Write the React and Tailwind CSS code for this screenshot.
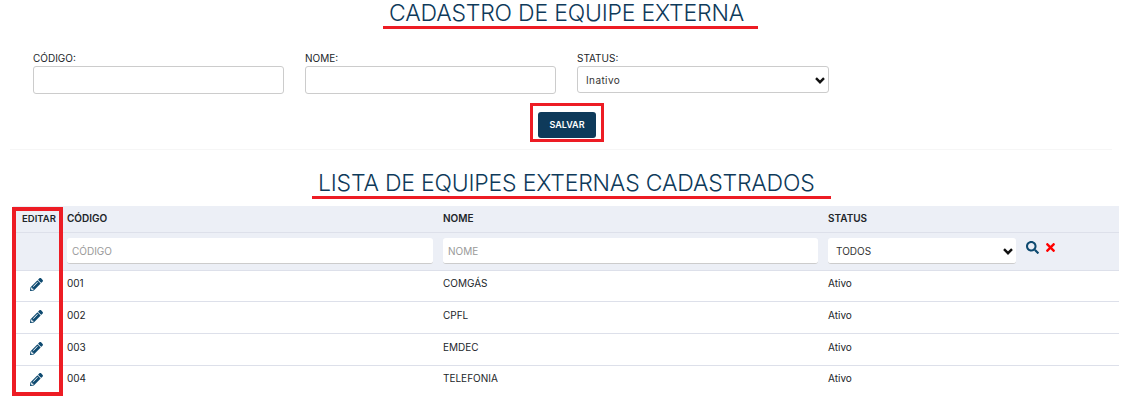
import React from 'react';
import { FaPencilAlt, FaSearch, FaTimes } from 'react-icons/fa';

const FONT = "font-['Inter','Liberation_Sans',sans-serif]";

const rows = [
  { codigo: '001', nome: 'COMGÁS', h: 'h-[31px]' },
  { codigo: '002', nome: 'CPFL', h: 'h-[32px]' },
  { codigo: '003', nome: 'EMDEC', h: 'h-[32px]' },
  { codigo: '004', nome: 'TELEFONIA', h: 'h-[31px]' },
];

const Chevron = () => (
  <svg width="10" height="7" viewBox="0 0 10 7" className="absolute right-[3px] top-[10px] pointer-events-none">
    <path d="M1 1.2 L5 5.2 L9 1.2" fill="none" stroke="#111" strokeWidth="2.4" />
  </svg>
);

const Field = ({ label, className, children }) => (
  <div className={className}>
    <div className="text-[10px] leading-[14px] text-[#212529] h-[15px]">{label}</div>
    {children}
  </div>
);

const Heading = ({ children, className }) => (
  <div className="flex justify-center">
    <h2 className={`box-border h-[29px] text-[23px] leading-[27px] tracking-[-0.2px] font-light text-[#0e3a5a] border-b-[3px] border-[#ed1c24] whitespace-nowrap pl-[6px] ${className}`}>
      {children}
    </h2>
  </div>
);

const App = () => {
  return (
    <div className={`relative w-[1122px] h-[402px] overflow-hidden bg-white ${FONT}`}>
      <Heading className="w-[375px] ml-[19px]">CADASTRO DE EQUIPE EXTERNA</Heading>

      <div className="flex gap-[21px] pl-[33px] mt-[22px]">
        <Field label="CÓDIGO:" className="w-[251px]">
          <input className="w-full h-[28px] bg-white border border-[#ccc] rounded-[3px]" />
        </Field>
        <Field label="NOME:" className="w-[251px]">
          <input className="w-full h-[28px] bg-white border border-[#ccc] rounded-[3px]" />
        </Field>
        <Field label="STATUS:" className="w-[252px]">
          <div className="relative h-[27px] border border-[#ccc] rounded-[3px] pl-[8px] text-[10px] tracking-[0.4px] leading-[27px] text-[#333]">
            Inativo
            <Chevron />
          </div>
        </Field>
      </div>

      <div className="flex justify-center mt-[9px]">
        <div className="border-[3px] border-[#ed1c24] w-[74px] h-[39px] pt-[4px] pl-[5px] ml-[12px]">
          <button className="w-[58px] h-[26px] bg-[#0e3a5a] rounded-[3px] text-white text-[9px] font-semibold">SALVAR</button>
        </div>
      </div>

      <div className="mx-[10px] mt-[7px] border-t border-[#f6f6f6]" />

      <div className="mt-[20px]">
        <Heading className="w-[519px] ml-[21px]">LISTA DE EQUIPES EXTERNAS CADASTRADOS</Heading>
      </div>

      <table className="mt-[7px] ml-[13px] w-[1106px] table-fixed border-collapse text-[10px] text-[#212529]">
        <colgroup>
          <col className="w-[49px]" />
          <col className="w-[376px]" />
          <col className="w-[385px]" />
          <col className="w-[198px]" />
          <col />
        </colgroup>
        <thead className="bg-[#eceff6]">
          <tr className="h-[26px] border-b border-[#dde0ea] text-left font-semibold">
            <th className="text-center font-semibold text-[9.5px] pl-[3px]">EDITAR</th>
            <th className="pl-[5px] font-semibold">CÓDIGO</th>
            <th className="pl-[5px] font-semibold">NOME</th>
            <th className="pl-[5px] font-semibold">STATUS</th>
            <th />
          </tr>
          <tr className="h-[38px] border-b border-[#dde0ea]">
            <td />
            <td className="px-[5px]">
              <div className="h-[26px] bg-white rounded-[3px] border-b border-[#ccc] pl-[5px] leading-[26px] text-[#999]">CÓDIGO</div>
            </td>
            <td className="px-[5px]">
              <div className="h-[26px] bg-white rounded-[3px] border-b border-[#ccc] pl-[5px] leading-[26px] text-[#999]">NOME</div>
            </td>
            <td className="px-[5px]">
              <div className="relative h-[26px] bg-white rounded-[3px] border-b border-[#ccc] pl-[8px] leading-[26px] text-[#333]">
                TODOS
                <Chevron />
              </div>
            </td>
            <td className="pl-[5px] align-top pt-[8px]">
              <div className="flex items-center gap-[5px]">
                <FaSearch size={13} className="text-[#0e4a70]" />
                <FaTimes size={13} className="text-[#f00]" />
              </div>
            </td>
          </tr>
        </thead>
        <tbody>
          {rows.map((row) => (
            <tr key={row.codigo} className={`${row.h} border-b border-[#dde0ea] last:border-b-0`}>
              <td className="pr-[2px] pb-[2px]">
                <FaPencilAlt size={13} className="mx-auto text-[#0e4a70]" />
              </td>
              <td className="pl-[5px] pb-[4px]">{row.codigo}</td>
              <td className="pl-[5px] pb-[4px]">{row.nome}</td>
              <td className="pl-[5px] pb-[4px]">Ativo</td>
              <td />
            </tr>
          ))}
        </tbody>
      </table>

      {/* marcacao vermelha sobre a coluna editar */}
      <div className="absolute left-[12px] top-[207px] w-[51px] h-[189px] border-4 border-[#ed1c24] pointer-events-none" />
    </div>
  );
};

export default App;
